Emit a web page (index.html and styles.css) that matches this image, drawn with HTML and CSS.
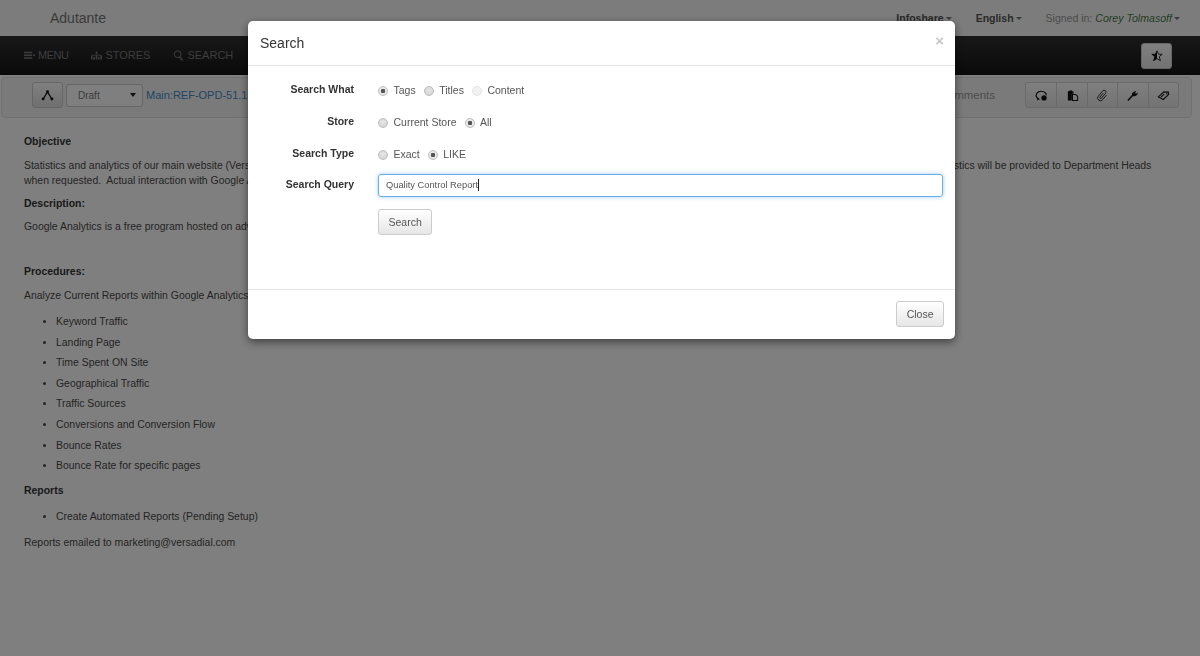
FILE: index.html
```html
<!DOCTYPE html>
<html lang="en">
<head>
<meta charset="utf-8">
<title>Adutante</title>
<link rel="stylesheet" href="styles.css">
</head>
<body>
<header class="topbar">
  <span class="brand">Adutante</span>
  <nav class="topnav">
    <span class="topitem strong">Infoshare<i class="caret"></i></span>
    <span class="topitem strong">English<i class="caret"></i></span>
    <span class="topitem signed">Signed in: <em>Corey Tolmasoff</em><i class="caret"></i></span>
  </nav>
</header>
<div class="navbar">
  <a class="navlink menu"><svg class="navicon" viewBox="0 0 12 12"><path d="M0 2h9v1.500H0zM0 5h9v1.500H0zM0 8h9v1.500H0zM10 5h2v1.500h-2z" fill="currentColor"/></svg>MENU</a>
  <a class="navlink"><svg class="navicon" viewBox="0 0 14 12"><path d="M6 1h2v3H6zM1 5h12v1H1zM0 6h2v5H0zM6 5h2v6H6zM12 6h2v5h-2zM3 8h2v3H3zM9 8h2v3H9z" fill="currentColor"/></svg>STORES</a>
  <a class="navlink"><svg class="navicon" viewBox="0 0 12 12"><circle cx="5" cy="4.600" r="3.600" fill="none" stroke="currentColor" stroke-width="1.100"/><path d="M7.200 7.500l3.300 4" stroke="currentColor" stroke-width="1.600" fill="none"/></svg>SEARCH</a>
  <button class="starbtn" type="button"><svg viewBox="0 0 14 14" width="12" height="12"><path d="M7 1l1.800 4H13l-3.400 2.700L11 12.500 7 10l-4 2.500 1.400-4.800L1 5h4.200z" fill="#fff" stroke="#111" stroke-width="1"/><path d="M7 1v9l-4 2.500 1.400-4.800L1 5h4.200z" fill="#111"/></svg></button>
</div>
<div class="toolbar">
  <button class="treebtn" type="button"><svg viewBox="0 0 14 12" width="13" height="11"><path d="M7 2L2.500 9.500M7 2l4.500 7.500" stroke="#111" stroke-width="1.400" fill="none"/><circle cx="7" cy="2" r="1.600" fill="#111"/><circle cx="2.200" cy="9.800" r="1.600" fill="#111"/><circle cx="11.800" cy="9.800" r="1.600" fill="#111"/></svg></button>
  <div class="selectbox"><span>Draft</span><i class="selarrow"></i></div>
  <a class="doclink">Main:REF-OPD-51.1.1</a>
  <span class="comments">Comments</span>
  <div class="btngroup">
    <button type="button"><svg viewBox="0 0 14 14" width="13" height="13"><path d="M3.600 10.500C1 9.500.6 6.300 2.300 4.200 4.300 1.900 8.800 1.800 11 4c.8.900 1.200 1.900 1.100 2.700" fill="none" stroke="#111" stroke-width="1.300"/><path d="M3 9.200l-.9 3.300 3.200-1.400z" fill="#111"/><circle cx="9.700" cy="9.600" r="2.900" fill="#111"/></svg></button>
    <button type="button"><svg viewBox="0 0 14 14" width="13" height="13"><path d="M3.500 1.500h3v1h1.500v2.500H6.300v7.500H2V2.500h1.500z" fill="#111"/><path d="M7 5.800h3.300l2.200 2v4.700H7z" fill="none" stroke="#111" stroke-width="1.100"/></svg></button>
    <button type="button"><svg viewBox="0 0 14 14" width="13" height="13"><path transform="rotate(40 7 7)" d="M6 4.500v5.500a1 1 0 0 0 2 0V3a2 2 0 0 0-4 0v7.500a3 3 0 0 0 6 0V4" fill="none" stroke="#222" stroke-width=".9"/></svg></button>
    <button type="button"><svg viewBox="0 0 14 14" width="13" height="13"><path d="M2 12.500L7 7" stroke="#111" stroke-width="1.600"/><path d="M6.500 7.500c-.8-2.300.8-4.900 4.700-5.300L9.800 4.300l.9.900 2-1.500c0 3.200-2.600 4.600-5 4z" fill="#111"/></svg></button>
    <button type="button"><svg viewBox="0 0 14 14" width="13" height="13"><path d="M1.500 8.500l5.800-5.300 5 .1.200 2.500-5.800 5.500z" fill="none" stroke="#222" stroke-width="1.300"/><path d="M4.300 8.800l3.500-3.300" stroke="#222" stroke-width="1.200"/><circle cx="10.600" cy="5" r=".8" fill="#222"/></svg></button>
  </div>
</div>
<main class="content">
  <h4 class="sect">Objective</h4>
  <p class="lead nowrap">Statistics and analytics of our main website (Versadial.com) are gathered through Google Analytics, reviewed on a regular schedule by the marketing team and used to guide decisions. Summarized statistics will be provided to Department Heads<br>when requested.&nbsp; Actual interaction with Google Analytics is limited to the marketing team.</p>
  <h4 class="sect desc">Description:</h4>
  <p class="lead">Google Analytics is a free program hosted on advertising servers.</p>
  <h4 class="sect proc">Procedures:</h4>
  <p class="lead">Analyze Current Reports within Google Analytics:</p>
  <ul class="list">
    <li>Keyword Traffic</li>
    <li>Landing Page</li>
    <li>Time Spent ON Site</li>
    <li>Geographical Traffic</li>
    <li>Traffic Sources</li>
    <li>Conversions and Conversion Flow</li>
    <li>Bounce Rates</li>
    <li>Bounce Rate for specific pages</li>
  </ul>
  <h4 class="sect">Reports</h4>
  <ul class="list end">
    <li>Create Automated Reports (Pending Setup)</li>
  </ul>
  <p class="lead">Reports emailed to marketing@versadial.com</p>
</main>
<div class="backdrop"></div>
<section class="modal">
  <div class="modal-head">
    <h3>Search</h3>
    <span class="close">×</span>
  </div>
  <form class="modal-body">
    <div class="row">
      <span class="lab">Search What</span>
      <div class="ctrl">
        <label class="opt"><input type="radio" name="what" checked>Tags</label>
        <label class="opt"><input type="radio" name="what">Titles</label>
        <label class="opt off"><input type="radio" name="what" disabled>Content</label>
      </div>
    </div>
    <div class="row">
      <span class="lab">Store</span>
      <div class="ctrl">
        <label class="opt"><input type="radio" name="store">Current Store</label>
        <label class="opt"><input type="radio" name="store" checked>All</label>
      </div>
    </div>
    <div class="row">
      <span class="lab">Search Type</span>
      <div class="ctrl">
        <label class="opt"><input type="radio" name="type">Exact</label>
        <label class="opt"><input type="radio" name="type" checked>LIKE</label>
      </div>
    </div>
    <div class="row queryrow">
      <span class="lab">Search Query</span>
      <div class="queryfield"><span class="querytext">Quality Control Report</span></div>
    </div>
    <div class="row btnrow">
      <span class="lab"></span>
      <button class="btn" type="button">Search</button>
    </div>
  </form>
  <div class="modal-foot">
    <button class="btn" type="button">Close</button>
  </div>
</section>
</body>
</html>
```
FILE: styles.css
```css
* { box-sizing: border-box; }
html, body { margin: 0; height: 656px; overflow: hidden; }
body { background: #fff; color: #4a4a4a; font: 10.450px/15px "Liberation Sans", Arial, sans-serif; }

.topbar { height: 36px; background: #f8f8f8; display: flex; align-items: center; padding: 0 20px 0 50px; }
.brand { font-size: 14px; color: #777; }
.topnav { margin-left: auto; display: flex; gap: 24px; }
.topitem { color: #777; font-size: 10.500px; display: flex; align-items: center; }
.topitem.strong { font-weight: bold; color: #555; }
.topitem em { color: #4a7a4a; margin-left: 3px; font-size: 10.600px; }
.topitem.signed { font-size: 10.500px; color: #999; }
.caret { display: inline-block; width: 0; height: 0; border: 3px solid transparent; border-top-color: #777; border-bottom: 0; margin-left: 2px; }

.navbar { height: 39px; background: linear-gradient(#303030, #141414); display: flex; align-items: center; padding: 0 28px 0 24px; gap: 23px; }
.navlink { color: #7a7a7a; font-size: 11px; display: flex; align-items: center; gap: 3px; }
.navlink.menu { letter-spacing: -.5px; }
.navicon { width: 11px; height: 11px; }
.starbtn { margin-left: auto; width: 31px; height: 26px; border: 1px solid #ccc; border-radius: 3px; background: linear-gradient(#fff, #e6e6e6); display: flex; align-items: center; justify-content: center; padding: 0; }

.toolbar { margin: 2px 8px 0 1px; height: 41px; background: #f5f5f5; border: 1px solid #e3e3e3; border-radius: 4px; display: flex; align-items: center; padding: 0 12px 5px 30px; }
.treebtn { width: 31px; height: 26px; padding: 0; border: 1px solid #ccc; border-radius: 3px; background: linear-gradient(#fff, #e0e0e0); display: flex; align-items: center; justify-content: center; }
.selectbox { width: 77px; height: 23px; margin-left: 3px; border: 1px solid #ccc; border-radius: 3px; background: #fff; display: flex; align-items: center; justify-content: space-between; padding: 0 6px 0 11px; font-size: 10px; color: #777; }
.selarrow { width: 0; height: 0; border: 3px solid transparent; border-top: 4px solid #222; border-bottom: 0; }
.doclink { color: #428bca; font-size: 11px; margin-left: 3px; white-space: nowrap; }
.comments { margin-left: auto; color: #999; font-size: 11.500px; }
.btngroup { margin: 0 0 0 30px; display: flex; height: 26px; border: 1px solid #d4d4d4; border-radius: 3px; overflow: hidden; }
.btngroup button { width: 30.400px; padding: 0; border: 0; border-left: 1px solid #d4d4d4; background: linear-gradient(#fff, #e6e6e6); display: flex; align-items: center; justify-content: center; }
.btngroup button:first-child { border-left: 0; }

.content { padding: 16px 48px 0 24px; }
.sect { margin: 0 0 9px; font-size: 10.450px; line-height: 15px; font-weight: bold; color: #333; }
.sect.desc { margin-bottom: 8px; }
.sect.proc { margin-top: 30px; }
.lead { margin: 0 0 8px; }
.nowrap { white-space: nowrap; word-spacing: -.05px; }
.list { margin: 11px 0 10px; padding: 0 0 0 32px; }
.list.end { margin-bottom: 11px; }
.list li { line-height: 15px; margin-bottom: 5.600px; }

.backdrop { position: fixed; inset: 0; background: #000; opacity: .5; }
.modal { position: fixed; left: 248px; top: 21px; width: 707px; height: 318px; background: #fff; border-radius: 5px; box-shadow: 0 3px 9px rgba(0, 0, 0, .5); display: flex; flex-direction: column; }
.modal-head { height: 45px; border-bottom: 1px solid #e5e5e5; display: flex; align-items: center; justify-content: space-between; padding: 0 11px 0 12px; }
.modal-head h3 { margin: 0; font-size: 14px; font-weight: normal; color: #333; }
.close { font-size: 15px; font-weight: bold; color: #c8c8c8; margin-top: -6px; }
.modal-body { flex: 1; padding: 8px 12px 0 0; display: flex; flex-direction: column; }
.row { display: flex; align-items: center; height: 32px; }
.queryrow { margin-top: -1px; }
.lab { width: 106px; text-align: right; font-weight: bold; font-size: 10.500px; color: #333; flex: none; margin-bottom: 1px; }
.ctrl { margin-left: 24px; padding-top: 1px; display: flex; gap: 8px; }
.opt { display: flex; align-items: center; color: #555; font-size: 10.500px; }
.opt input { appearance: none; width: 10px; height: 10px; margin: 0 5.500px 0 0; border: 1px solid #bdbdbd; border-radius: 50%; background: radial-gradient(circle at 50% 40%, #e6e6e6, #cfcfcf); display: inline-block; }
.opt input:checked { background: radial-gradient(circle, #555 0 2px, #e8e8e8 2.500px); }
.opt.off input { border-color: #e4e4e4; background: #f2f2f2; }
.queryfield { margin-left: 24px; flex: 1; height: 23px; border: 1px solid #66afe9; border-radius: 3px; box-shadow: 0 0 4px rgba(102, 175, 233, .6); display: flex; align-items: center; padding-left: 7px; }
.querytext { font-size: 9.300px; color: #555; border-right: 1px solid #222; line-height: 12px; }
.btnrow { margin-top: 5px; }
.btn { height: 26px; padding: 0 9.500px; margin-left: 24px; border: 1px solid #ccc; border-radius: 3px; background: linear-gradient(#fff, #e6e6e6); font: 10.500px "Liberation Sans", Arial, sans-serif; color: #555; }
.modal-foot { height: 50px; border-top: 1px solid #e5e5e5; display: flex; align-items: center; justify-content: flex-end; padding: 0 11px 2px; }
.modal-foot .btn { margin: 0; }
```
